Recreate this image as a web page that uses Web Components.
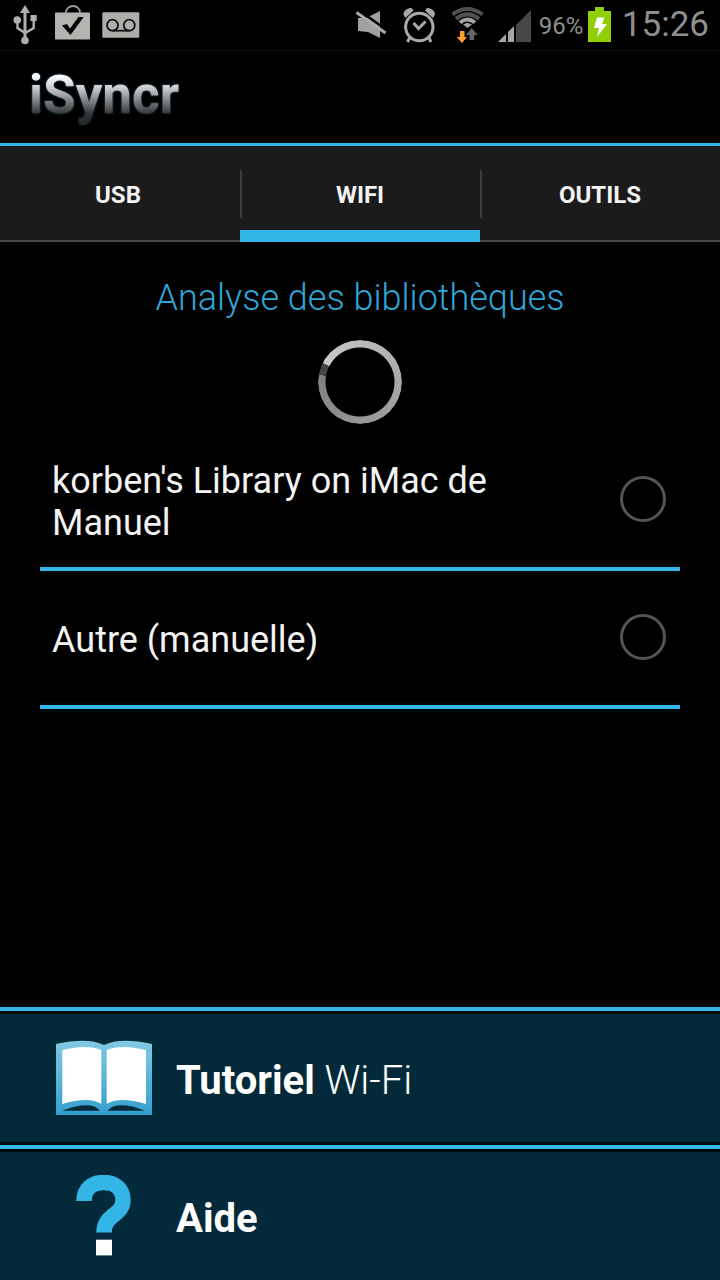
<!DOCTYPE html>
<html lang="fr">
<head>
<meta charset="utf-8">
<meta name="viewport" content="width=device-width, initial-scale=1">
<title>iSyncr</title>
<style>
  html { --accent: #33b5e5; background: #000; }
  body { margin: 0; color: #f3f3f3; font-family: Roboto, "Noto Sans", sans-serif; }
</style>
</head>
<body>
<sync-app></sync-app>

<template id="status-bar">
  <style>
    :host { display: flex; align-items: center; justify-content: space-between; height: 50px; padding: 0 11px 0 1px; border-bottom: 1px solid #111; color: #8f8f8f; }
    .group { display: flex; align-items: center; }
    svg { display: block; height: 50px; }
    .level { width: 43px; font-size: 24px; line-height: 28px; padding-top: 2px; text-align: right; }
    .battery { margin-left: 5px; }
    time { margin-left: 11px; font-size: 35px; line-height: 48px; }
  </style>
  <div class="group">
    <svg width="48" viewBox="0 0 48 50" fill="#b0b0b0" role="img" aria-label="USB"><path d="M24 5l5 8h-3.500v24h-3V13H19z"/><circle cx="24" cy="40.500" r="3.800"/><circle cx="16.300" cy="20" r="3.800"/><path d="M29.500 15h6.200v6h-6.200z"/><path d="M16.500 20v8l7.500 5 8.700-5v-8" fill="none" stroke="#b0b0b0" stroke-width="2.400"/></svg>
    <svg width="48" viewBox="0 0 48 50" role="img" aria-label="Boutique"><path d="M17 14V12.500a7 6.500 0 0 1 14 0v1.500" fill="none" stroke="#9c9c9c" stroke-width="1.800"/><rect x="6" y="12.500" width="35" height="27" rx="1" fill="#b3b4b0"/><path d="M13 25.500l5-1.500 3 4.500L29.500 17h5.200L21.500 35z"/></svg>
    <svg width="48" viewBox="0 0 48 50" role="img" aria-label="Messagerie vocale"><rect x="5.300" y="12.300" width="37" height="25.500" rx="1" fill="#acaeaa"/><g fill="none" stroke="#111" stroke-width="1.800"><circle cx="15.500" cy="25.200" r="5.500"/><circle cx="32.300" cy="25.200" r="5.500"/><path d="M15.500 30.700h17"/></g></svg>
  </div>
  <div class="group">
    <svg width="48" viewBox="0 0 48 50" role="img" aria-label="Muet"><path d="M11 18h8l14-7v27L21 32l-10-1z" fill="#a0a1a0"/><path d="M11.500 10L40.500 30.500" stroke="#000" stroke-width="2.500"/><path d="M9.500 12.500L38.500 33" stroke="#a9aaa9" stroke-width="3"/></svg>
    <svg width="48" viewBox="0 0 48 50" fill="none" stroke="#a8a9a8" role="img" aria-label="Alarme"><circle cx="24.300" cy="27" r="13.700" stroke-width="3"/><path d="M18.500 23l5 5.500 7-7M14.500 38l-2 4M34 38l2 4" stroke-width="3"/><path d="M8.500 14.500c0-4 4-6.500 8-6.500l2 2.500-8 7.500zM40 14.500c0-4-4-6.500-8-6.500l-2 2.500 8 7.500z" fill="#a8a9a8" stroke="none"/></svg>
    <svg width="48" viewBox="0 0 48 50" fill="none" stroke-width="4" role="img" aria-label="Wi-Fi"><path d="M9.500 14.500Q24.300 3.500 39.500 14.500" stroke="#505050"/><path d="M13 18.800Q24.300 10 36 18.800" stroke="#505050"/><path d="M17 22.500Q24.300 16.500 32 22.500" stroke="#a3a3a3"/><path d="M20 24.500q4.300-3 9 0l-4.500 3.500z" fill="#a3a3a3"/><path d="M28.700 28l6 7h-3.500v5h-4.700v-5H23z" fill="#666"/><path d="M17 31h4.500v6H24l-5 6-5.300-6H17z" fill="#ffa12b"/></svg>
    <svg width="48" viewBox="0 0 48 50" role="img" aria-label="Signal mobile"><path d="M25 25L40 10v32H25z" fill="#484848"/><path d="M7 42l8-8v8zM17 32l6-6v16h-6z" fill="#a5a6a5"/></svg>
    <span class="level">96%</span>
    <svg class="battery" width="24" viewBox="0 0 24 50" role="img" aria-label="En charge"><path d="M8 7h9v4h7v31H1V11h7z" fill="#90cf08"/><path d="M10 17.500h7.500L15 24h5L10 37l2-9H7z" fill="#fff"/></svg>
    <time datetime="15:26">15:26</time>
  </div>
</template>

<template id="app-header">
  <style>
    :host { display: flex; align-items: center; height: 92px; padding: 0 29px; border-bottom: 3px solid var(--accent); }
    h1 { margin: 0 0 4px; font-size: 53px; line-height: 64px; font-weight: 700; color: transparent; background: linear-gradient(#fff 20%, #c8c8c8 40%, #333 80%, #222); background-clip: text; -webkit-background-clip: text; filter: drop-shadow(0 0 1px #28617a); }
  </style>
  <h1><slot></slot></h1>
</template>

<template id="tab-bar">
  <style>
    :host { display: block; background: #1b1b1b; }
    div { display: grid; grid-template-columns: repeat(3, 1fr); }
    button { height: 96px; padding: 4px 4px 0 0; border: 0; border-bottom: 2px solid #484848; background: linear-gradient(#3c3c3c, #3c3c3c) left 24px / 2px 48px no-repeat; color: #f3f3f3; font: 700 24px/28px Roboto, sans-serif; }
    button:first-child { background: none; }
    button + button { padding-right: 0; }
    button[aria-selected="true"] { border-bottom: 12px solid var(--accent); padding-top: 14px; }
  </style>
  <div role="tablist">
    <button role="tab" aria-selected="false">USB</button>
    <button role="tab" aria-selected="true">WIFI</button>
    <button role="tab" aria-selected="false">OUTILS</button>
  </div>
</template>

<template id="busy-title">
  <style>
    :host { display: flex; flex-direction: column; align-items: center; gap: 20px; padding: 34px 0 12px; }
    h2 { margin: 0; color: #2fa6d6; font-size: 36px; line-height: 44px; font-weight: 300; }
    i { width: 84px; height: 84px; border-radius: 50%; background: conic-gradient(from 297deg, #c9c9c9, #808080 343deg, #444 343deg); mask: radial-gradient(circle, transparent 34px, #000 35px); }
  </style>
  <h2><slot></slot></h2>
  <i role="progressbar" aria-label="Analyse en cours"></i>
</template>

<template id="glow-line">
  <style>
    :host { display: block; height: 10px; background: linear-gradient(#020a0e 3px, var(--accent) 3px 7px, #020a0e 7px); }
  </style>
</template>

<template id="library-option">
  <style>
    :host { display: block; }
    label { display: flex; align-items: center; justify-content: space-between; gap: 40px; min-height: 128px; padding: 0 14px 0 12px; box-sizing: border-box; font-size: 36px; line-height: 42px; }
    span { max-width: 480px; padding-top: 4px; }
    input { appearance: none; flex: none; width: 46px; height: 46px; margin: 0 0 2px; border: 3px solid #555; border-radius: 50%; }
    input:checked { background: radial-gradient(circle, var(--accent) 10px, transparent 11px); }
  </style>
  <label><span><slot></slot></span><input type="radio" name="library"></label>
</template>

<template id="action-link">
  <style>
    :host { display: block; background: #022a3a; }
    a { display: flex; align-items: center; gap: 23px; height: 128px; padding: 0 55px; color: #fff; text-decoration: none; font-size: 40px; line-height: 48px; font-weight: 300; }
    .icon { display: flex; justify-content: center; width: 98px; }
    .label { padding-top: 6px; }
  </style>
  <a href="#"><span class="icon"><slot name="icon"></slot></span><span class="label"><slot></slot></span></a>
</template>

<template id="sync-app">
  <style>
    :host { display: flex; flex-direction: column; min-height: 100vh; }
    main { flex: 1; }
    section { padding: 0 40px; }
    svg { display: block; }
    b { font-weight: 700; }
  </style>
  <status-bar></status-bar>
  <app-header>iSyncr</app-header>
  <tab-bar></tab-bar>
  <main>
    <busy-title>Analyse des bibliothèques</busy-title>
    <section>
      <library-option>korben's Library on iMac de Manuel</library-option>
      <glow-line></glow-line>
      <library-option>Autre (manuelle)</library-option>
      <glow-line></glow-line>
    </section>
  </main>
  <nav>
    <glow-line></glow-line>
    <action-link>
      <svg slot="icon" width="98" height="76" viewBox="0 0 98 76" aria-hidden="true">
        <defs><linearGradient id="cover" x2="0" y2="1"><stop stop-color="#83c9e2"/><stop offset="1" stop-color="#349fcd"/></linearGradient></defs>
        <path d="M1 4Q33-3 49 5 65-3 97 4v71H1z" fill="url(#cover)"/>
        <path d="M7.300 10Q32 4 46.300 10v54Q34 56 7.300 64zM51.700 10Q66 4 91 10v54Q64 56 51.700 64z" fill="#fff"/>
        <path d="M7.500 70.700Q36 60 45 70.700zM52.500 70.700Q62 60 90 70.700z" fill="#022a3a"/>
      </svg>
      <b>Tutoriel</b> Wi-Fi
    </action-link>
    <glow-line></glow-line>
    <action-link>
      <svg slot="icon" width="56" height="82" viewBox="0 0 56 82" aria-hidden="true">
        <path d="M8 26C8 14 16 7.500 27.500 7.500 39 7.500 47 14 47 25 47 41 28 39 28 57.500" fill="none" stroke="#33b5e5" stroke-width="15.500"/>
        <path d="M20 64.700h16v15.700H20z" fill="#fff"/>
      </svg>
      <b>Aide</b>
    </action-link>
  </nav>
</template>

<script>
  for (const name of ["status-bar", "app-header", "tab-bar", "busy-title", "glow-line", "library-option", "action-link", "sync-app"]) {
    customElements.define(name, class extends HTMLElement {
      constructor() {
        super();
        this.attachShadow({ mode: "open" }).append(document.getElementById(name).content.cloneNode(true));
      }
    });
  }
</script>
</body>
</html>
